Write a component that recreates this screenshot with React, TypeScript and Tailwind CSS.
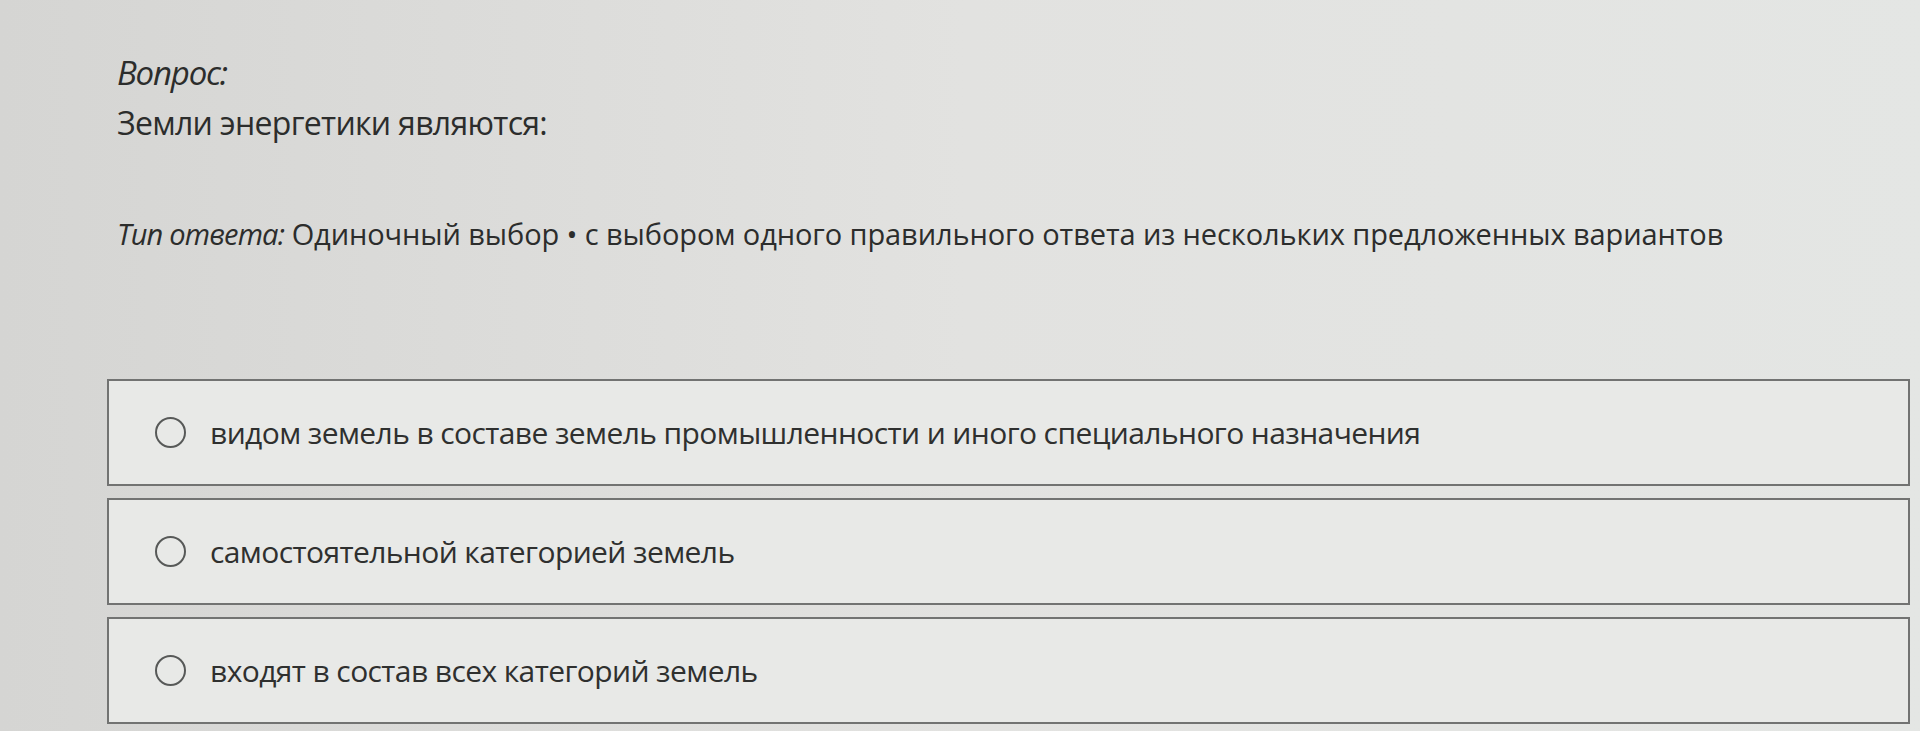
const options = [
  "видом земель в составе земель промышленности и иного специального назначения",
  "самостоятельной категорией земель",
  "входят в состав всех категорий земель",
];

const RadioOption: React.FC<{ label: string }> = ({ label }) => {
  return (
    <label className="flex items-center h-[107px] border-2 border-[#727372] bg-[#e8e9e7] pl-[46px] cursor-pointer">
      <span className="block size-[31px] rounded-full border-2 border-[#575958] shrink-0" />
      <span className="ml-[24px] text-[30px] leading-[38px] tracking-[-0.6px] text-[#2f302f]">{label}</span>
    </label>
  );
};

export default function App() {
  return (
    <div className="w-full min-h-[731px] overflow-hidden bg-gradient-to-r from-[#d5d5d3] via-[#e2e2e0] to-[#e4e6e4] font-['Open_Sans','Noto_Sans',sans-serif] text-[#2c2d2c]">
      <div className="pl-[117px] pt-[54px]">
        <p className="italic text-[33px] leading-[38px] tracking-[-1.2px]">Вопрос:</p>
        <p className="mt-[11px] text-[32px] leading-[40px] tracking-[-0.7px]">Земли энергетики являются:</p>
        <p className="mt-[73px] text-[29px] leading-[36px] tracking-[-0.1px]">
          <span className="italic tracking-[-0.8px]">Тип ответа:</span> Одиночный выбор • с выбором одного правильного ответа из нескольких предложенных вариантов
        </p>
      </div>
      <div className="mt-[127px] flex flex-col gap-[12px] pl-[107px] pr-[10px]">
        {options.map((o) => (
          <RadioOption key={o} label={o} />
        ))}
      </div>
    </div>
  );
}
